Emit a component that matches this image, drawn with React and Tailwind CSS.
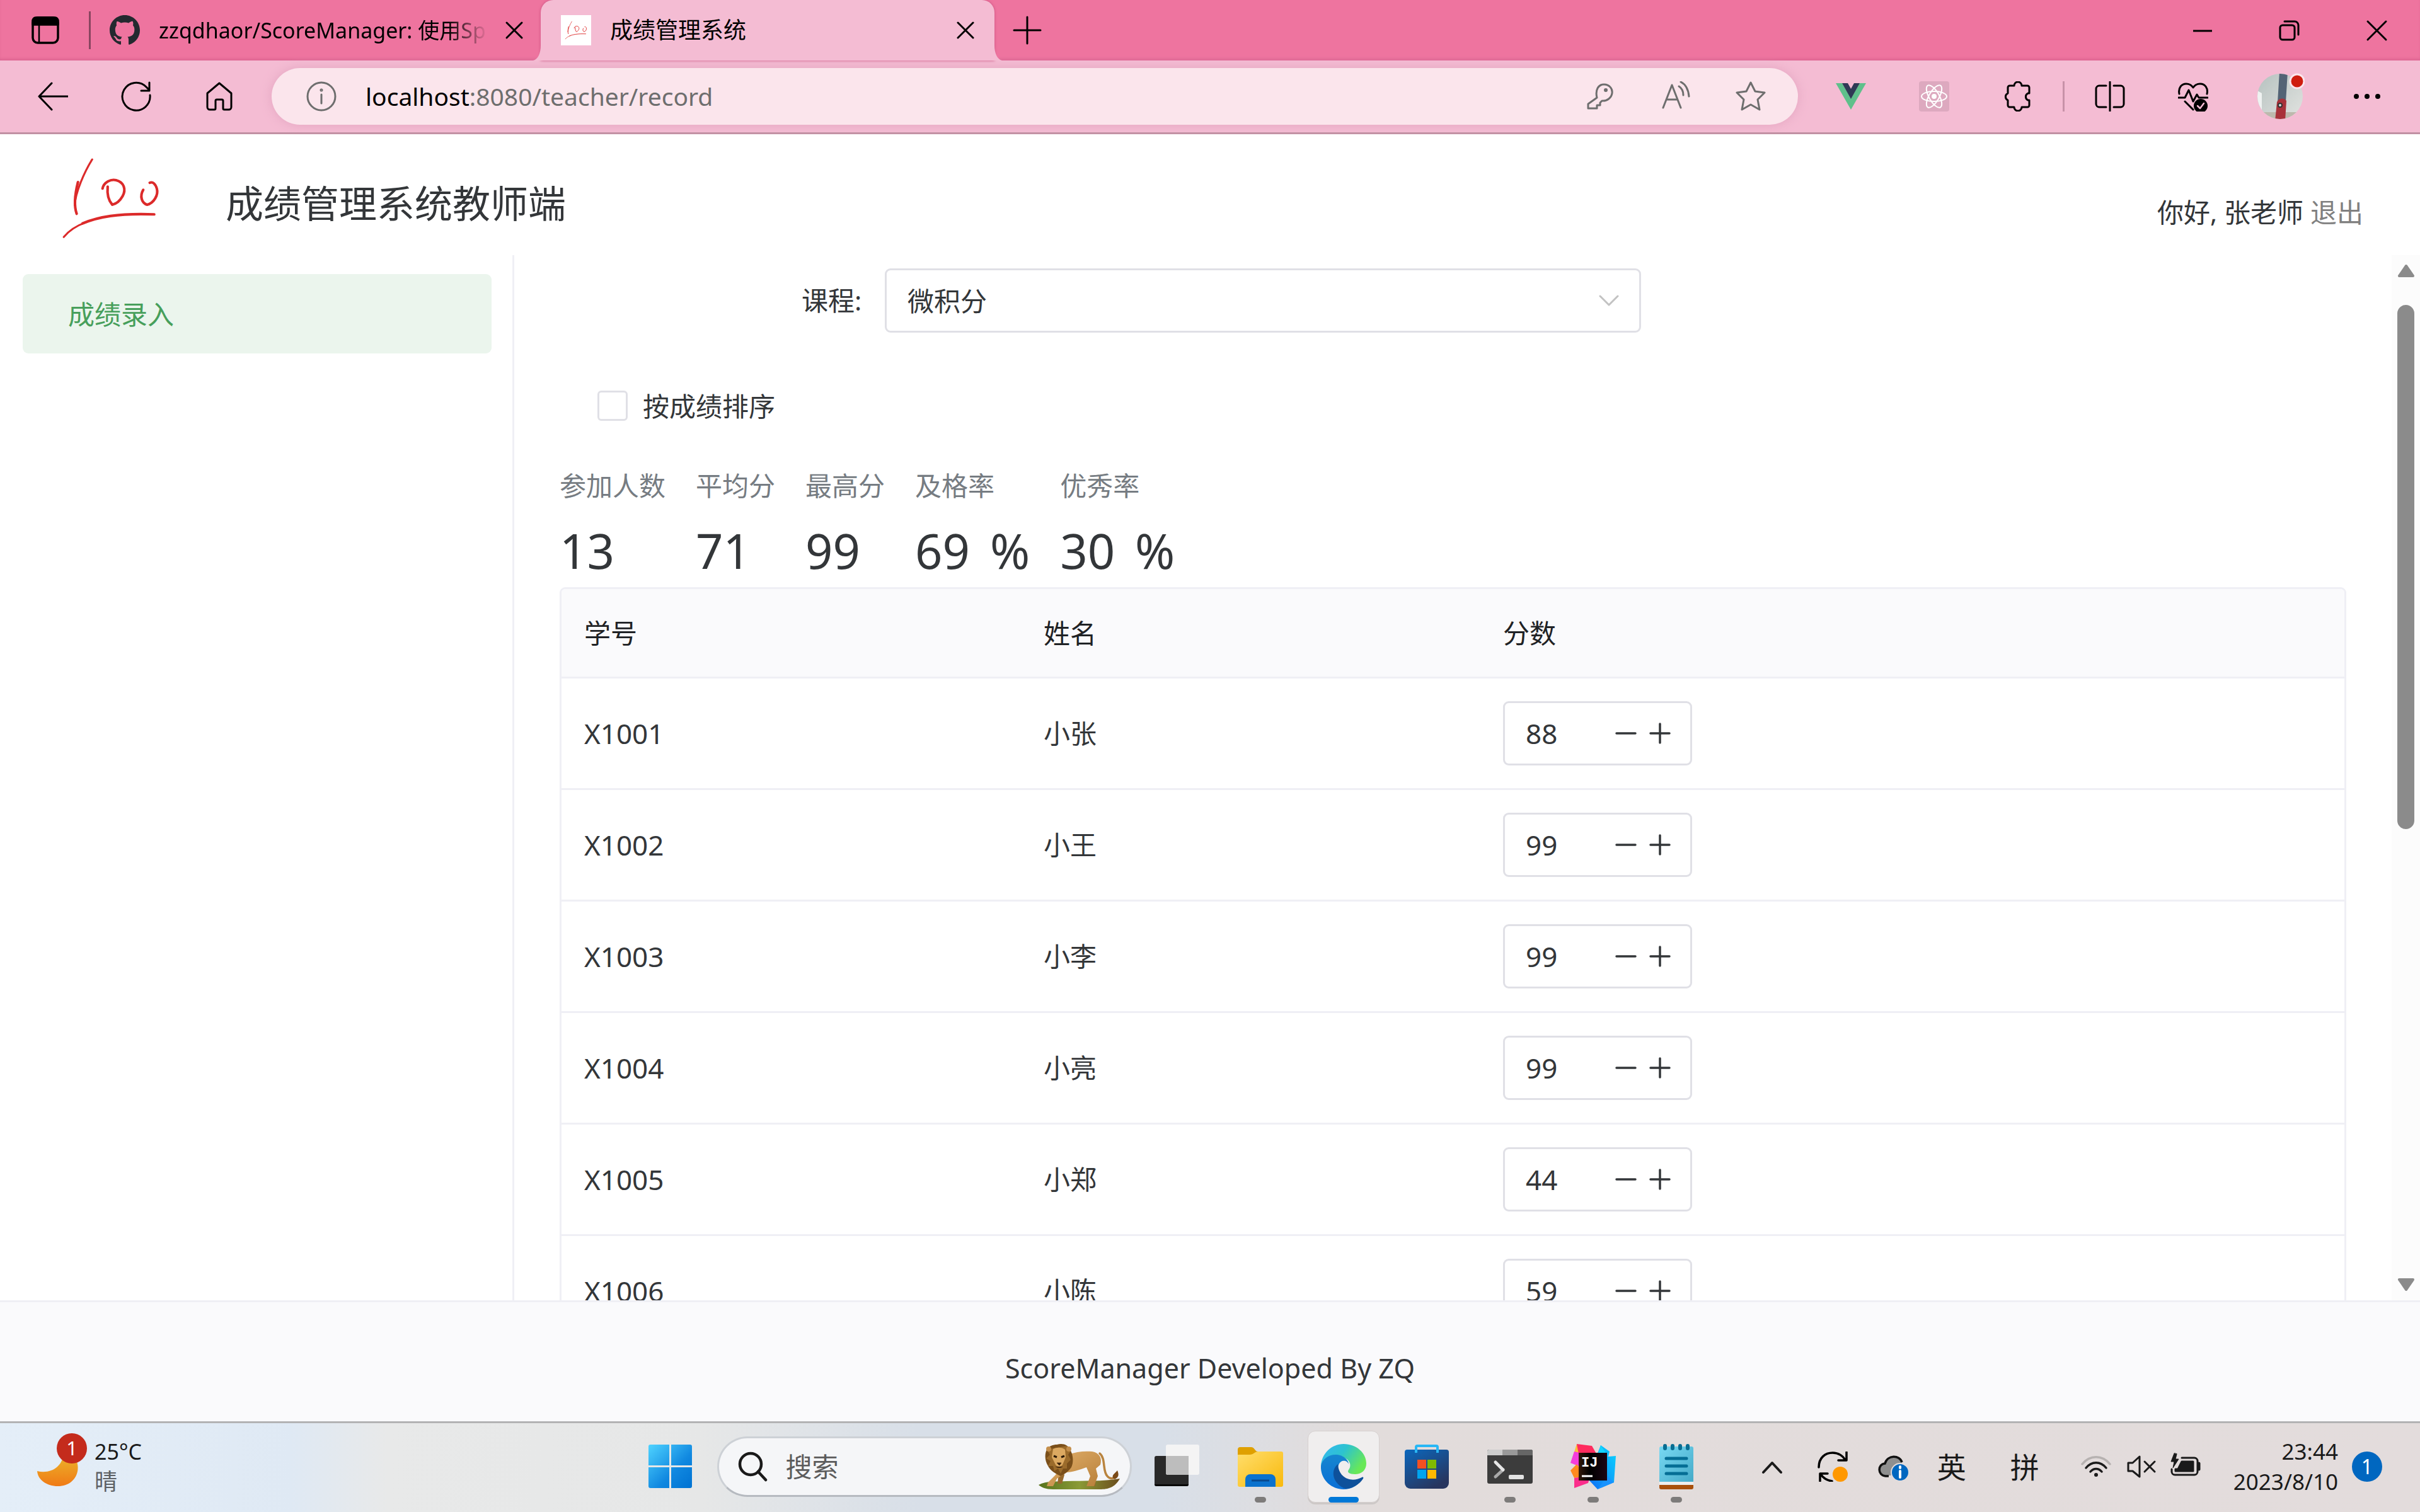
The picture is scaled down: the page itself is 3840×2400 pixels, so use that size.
import React, { useState } from "react";

const students = [
  { id: "X1001", name: "小张", score: 88 },
  { id: "X1002", name: "小王", score: 99 },
  { id: "X1003", name: "小李", score: 99 },
  { id: "X1004", name: "小亮", score: 99 },
  { id: "X1005", name: "小郑", score: 44 },
  { id: "X1006", name: "小陈", score: 59 },
];

const stats = [
  { label: "参加人数", value: "13" },
  { label: "平均分", value: "71" },
  { label: "最高分", value: "99" },
  { label: "及格率", value: "69", suffix: "%" },
  { label: "优秀率", value: "30", suffix: "%" },
];

function Line({ className = "size-12", w = 3, children, ...rest }) {
  return (
    <svg
      viewBox="0 0 48 48"
      className={className}
      fill="none"
      stroke="currentColor"
      strokeWidth={w}
      strokeLinecap="round"
      strokeLinejoin="round"
      aria-hidden="true"
      {...rest}
    >
      {children}
    </svg>
  );
}

function HundredMark({ className, w = 4 }) {
  return (
    <svg viewBox="98 250 156 130" className={className} fill="none" stroke="#dc2a2a" strokeLinecap="round" strokeLinejoin="round" aria-hidden="true">
      <path strokeWidth={w - 1} d="M147 255C135 274 121 306 120 326" />
      <path strokeWidth={w} d="M125 290C119 314 119 328 123 339" />
      <path strokeWidth={w} d="M163 300C165 290 176 285 184 287C196 290 200 301 194 312C190 319 184 324 178 325C172 318 170 307 171 297" />
      <path strokeWidth={w} d="M226 302C220 312 224 323 232 325C242 323 250 310 247 300C245 293 241 289 236 291" />
      <path strokeWidth={w - 1} d="M103 375C112 364 124 357 138 352" />
      <path strokeWidth={w} d="M132 354C156 344 186 338 243 340" />
    </svg>
  );
}

function TabStrip() {
  return (
    <div className="flex h-24 shrink-0 items-center bg-[#ee749f] text-black shadow-[inset_0_-4px_5px_-2px_#d9628f]">
      <button aria-label="标签页操作" className="ml-12 flex size-12 items-center justify-center">
        <Line w={3.5}>
          <rect x="4" y="4" width="40" height="40" rx="8" />
          <path d="M4 8a6 6 0 0 1 6-4h28a6 6 0 0 1 6 4v7H4z" fill="currentColor" />
          <path d="M14 16v27" strokeWidth="2.5" />
        </Line>
      </button>
      <div className="ml-[45px] h-15 w-[3px] bg-[#8a4560]" />
      <div className="ml-[30px] flex w-[684px] items-center">
        <svg viewBox="0 0 16 16" className="size-12 shrink-0" fill="#24292f" aria-hidden="true">
          <path d="M8 0C3.58 0 0 3.58 0 8c0 3.54 2.29 6.53 5.47 7.59.4.07.55-.17.55-.38 0-.19-.01-.82-.01-1.49-2.01.37-2.53-.49-2.69-.94-.09-.23-.48-.94-.82-1.13-.28-.15-.68-.52-.01-.53.63-.01 1.08.58 1.23.82.72 1.21 1.87.87 2.33.66.07-.52.28-.87.51-1.07-1.78-.2-3.64-.89-3.64-3.95 0-.87.31-1.59.82-2.15-.08-.2-.36-1.02.08-2.12 0 0 .67-.21 2.2.82.64-.18 1.32-.27 2-.27s1.36.09 2 .27c1.53-1.04 2.2-.82 2.2-.82.44 1.1.16 1.92.08 2.12.51.56.82 1.27.82 2.15 0 3.07-1.87 3.75-3.65 3.95.29.25.54.73.54 1.48 0 1.07-.01 1.93-.01 2.2 0 .21.15.46.55.38A8.01 8.01 0 0 0 16 8c0-4.42-3.58-8-8-8z" />
        </svg>
        <span className="ml-[30px] w-[522px] overflow-hidden whitespace-nowrap text-[34px] leading-[48px] [mask-image:linear-gradient(to_right,black_88%,transparent_100%)]">
          zzqdhaor/ScoreManager: 使用Sp
        </span>
        <button aria-label="关闭标签页" className="ml-[18px] flex size-12 shrink-0 items-center justify-center">
          <Line><path d="M12 12l24 24M36 12L12 36" /></Line>
        </button>
      </div>
      <div className="relative flex h-24 w-[720px] items-center rounded-t-[20px] bg-[#f4bcd3] shadow-[0_0_4px_#c9507e]">
        <svg viewBox="0 0 12 24" className="absolute bottom-0 -left-3 h-6 w-3" fill="#f4bcd3" aria-hidden="true"><path d="M12 0v24H0C8 22 12 12 12 0z" /></svg>
        <svg viewBox="0 0 12 24" className="absolute -right-3 bottom-0 h-6 w-3" fill="#f4bcd3" aria-hidden="true"><path d="M0 0v24h12C4 22 0 12 0 0z" /></svg>
        <span className="ml-8 flex size-12 items-center justify-center bg-white">
          <HundredMark className="w-9" w={4} />
        </span>
        <span className="ml-[30px] flex-1 text-[36px] leading-[48px]">成绩管理系统</span>
        <button aria-label="关闭标签页" className="mr-[22px] flex size-12 items-center justify-center">
          <Line><path d="M12 12l24 24M36 12L12 36" /></Line>
        </button>
      </div>
      <button aria-label="新建标签页" className="ml-7 size-12">
        <Line><path d="M24 3v42M3 24h42" /></Line>
      </button>
      <div className="ml-auto flex">
        <button aria-label="最小化" className="flex w-[138px] justify-center">
          <Line strokeLinecap="butt"><path d="M9 25h30" /></Line>
        </button>
        <button aria-label="还原" className="flex w-[138px] justify-center">
          <Line>
            <rect x="9" y="16" width="23" height="23" rx="4" />
            <path d="M16 10h16a6 6 0 0 1 6 6v15" />
          </Line>
        </button>
        <button aria-label="关闭" className="flex w-[138px] justify-center">
          <Line><path d="M10 10l29 29M39 10L10 39" /></Line>
        </button>
      </div>
    </div>
  );
}

function AddressBar() {
  return (
    <div className="flex h-[117px] shrink-0 items-center border-b-[3px] border-[#c191a3] bg-[#f4bcd3] pr-[18px] pl-15 text-black">
      <div className="flex gap-21">
        <button aria-label="后退"><Line><path d="M22 3L2 24l20 21M2 24h46" /></Line></button>
        <button aria-label="刷新">
          <Line><path d="M46 22a22 22 0 1 1-6-13l5 5M45 2v13H32" /></Line>
        </button>
        <button aria-label="主页">
          <Line><path d="M24 3L5 19v22a4 4 0 0 0 4 4h7a2 2 0 0 0 2-2V31a2 2 0 0 1 2-2h8a2 2 0 0 1 2 2v12a2 2 0 0 0 2 2h7a4 4 0 0 0 4-4V19z" /></Line>
        </button>
      </div>
      <div className="mr-[18px] ml-[59px] flex h-[90px] flex-1 items-center rounded-full bg-[#fbe5ec] pr-[15px] pl-[55px] text-[#6e6e6e] shadow-[0_0_18px_#e3a5c0]">
        <button aria-label="网站信息">
          <Line>
            <circle cx="24" cy="24" r="22" />
            <path d="M24 21v14" />
            <circle cx="24" cy="14" r="1" />
          </Line>
        </button>
        <span className="ml-[46px] flex-1 text-[39px] leading-[60px]">
          <span className="text-black">localhost</span>:8080/teacher/record
        </span>
        <button aria-label="密码" className="flex w-30 justify-center">
          <Line>
            <path d="M20 26C17 14 22 5 31 5s14 7 13 14-8 13-16 12l-3 3v4h-5v5H6v-7z" />
            <circle cx="34" cy="14" r="1.5" />
          </Line>
        </button>
        <button aria-label="朗读" className="flex w-30 justify-center">
          <Line><path d="M5 42L19 6l14 36M10 29h18M30 8c5 3 7 8 7 14M33 1c8 4 12 12 13 23" /></Line>
        </button>
        <button aria-label="收藏" className="flex w-30 justify-center">
          <Line><path d="M24 2l7 14 15 2-11 11 3 16-14-8-14 8 3-16L2 18l15-2z" /></Line>
        </button>
      </div>
      <button aria-label="Vue" className="flex w-[132px] justify-center">
        <svg viewBox="0 0 48 48" className="size-12" aria-hidden="true">
          <path d="M0 3h10l14 24L38 3h10L24 45z" fill="#5fc08b" />
          <path d="M10 3h9l5 9 5-9h9L24 28z" fill="#2f3a55" />
        </svg>
      </button>
      <button aria-label="React" className="flex w-[132px] justify-center">
        <svg viewBox="0 0 48 48" className="size-12" fill="none" stroke="#fff" strokeWidth="2" aria-hidden="true">
          <rect width="48" height="48" rx="4" fill="#dda9bf" stroke="none" />
          <ellipse cx="24" cy="24" rx="20" ry="8" />
          <ellipse cx="24" cy="24" rx="20" ry="8" transform="rotate(60 24 24)" />
          <ellipse cx="24" cy="24" rx="20" ry="8" transform="rotate(120 24 24)" />
          <circle cx="24" cy="24" r="4" fill="#fff" stroke="none" />
        </svg>
      </button>
      <button aria-label="扩展" className="flex w-[132px] justify-center">
        <Line><path d="M9 10a3 3 0 0 1 3-3h7a6 6 0 0 1 12 0h9a3 3 0 0 1 3 3v9h-2a6 6 0 0 0 0 11h2v8a3 3 0 0 1-3 3h-9a6 6 0 0 1-12 0h-7a3 3 0 0 1-3-3v-8a6 6 0 0 1 0-11z" /></Line>
      </button>
      <div className="mr-[6px] ml-[6px] h-12 w-[3px] bg-[#c792a8]" />
      <button aria-label="分屏" className="flex w-[132px] justify-center">
        <Line><path d="M24 1v46M18 7H7a5 5 0 0 0-5 5v24a5 5 0 0 0 5 5h11M30 7h11a5 5 0 0 1 5 5v24a5 5 0 0 1-5 5H30" /></Line>
      </button>
      <button aria-label="浏览器概要" className="flex w-[132px] justify-center">
        <Line>
          <path d="M2 20C0 10 6 4 13 4c5 0 9 3 11 6 2-3 6-6 11-6 8 0 13 7 11 16M1 26h10l6-12 7 18 6-11 3 5h14M11 32l13 13" />
          <circle cx="36" cy="39" r="11" fill="currentColor" stroke="none" />
          <path d="M31 39l4 4 6-8" stroke="#f4bcd3" strokeWidth="2.5" />
        </Line>
      </button>
      <button aria-label="个人资料" className="flex w-36 justify-center">
        <svg viewBox="0 0 78 78" className="size-[78px]" aria-hidden="true">
          <defs>
            <clipPath id="avatarClip"><circle cx="39" cy="39" r="36" /></clipPath>
            <linearGradient id="avatarWall" x1="0" x2="1" y1="0" y2="1">
              <stop offset="0" stopColor="#b4c0be" />
              <stop offset="1" stopColor="#e4e5e2" />
            </linearGradient>
          </defs>
          <g clipPath="url(#avatarClip)">
            <rect width="78" height="78" fill="url(#avatarWall)" />
            <path d="M0 64h78v14H0z" fill="#bdb9ad" />
            <path d="M3 30l7 4v30H3z" fill="#eff2f1" />
            <path d="M38 0h13L48 48H35z" fill="#536375" />
            <path d="M34 48c2-6 11-8 15-2l-2 32H31z" fill="#a8323a" />
            <circle cx="39" cy="53" r="3" fill="#ddd" stroke="#333" strokeWidth="2" />
          </g>
          <circle cx="66" cy="15" r="11" fill="#cf1d0f" stroke="#fbe5ec" strokeWidth="3" />
        </svg>
      </button>
      <button aria-label="设置及其他" className="flex w-[132px] justify-center">
        <Line stroke="none" fill="currentColor"><circle cx="7" cy="24" r="4" /><circle cx="24" cy="24" r="4" /><circle cx="41" cy="24" r="4" /></Line>
      </button>
    </div>
  );
}

function ScoreInput({ student }) {
  const [value, setValue] = useState(student.score);
  return (
    <div className="flex h-[102px] w-[300px] items-center rounded-[9px] border-[3px] border-[#e0e0e6] bg-white pr-[21px] pl-[33px]">
      <input
        aria-label={student.name + "的分数"}
        inputMode="numeric"
        value={value}
        onChange={(e) => setValue(Number(e.target.value) || 0)}
        className="w-0 flex-1 bg-transparent text-[44px] leading-[66px] outline-none"
      />
      <button aria-label="减少" className="flex w-[54px] justify-center" onClick={() => setValue(value - 1)}>
        <Line w={3.5}><path d="M9 24h30" /></Line>
      </button>
      <button aria-label="增加" className="flex w-[54px] justify-center" onClick={() => setValue(value + 1)}>
        <Line w={3.5}><path d="M9 24h30M24 9v30" /></Line>
      </button>
    </div>
  );
}

function Content() {
  return (
    <main className="flex min-w-0 flex-1 overflow-hidden">
      <div className="min-w-0 flex-1 px-18 pt-[21px]">
        <div className="flex items-center pl-96">
          <label htmlFor="course" className="w-24 whitespace-nowrap leading-[66px]">课程:</label>
          <div className="relative ml-9 w-[1200px]">
            <select id="course" className="h-[102px] w-full appearance-none rounded-[9px] border-[3px] border-[#e0e0e6] bg-white px-[33px] outline-none">
              <option>微积分</option>
            </select>
            <Line w={3} className="pointer-events-none absolute top-[27px] right-[27px] size-12 text-[#c2c2c2]"><path d="M10 17l14 14 14-14" /></Line>
          </div>
        </div>
        <label className="mt-18 ml-15 flex h-[88px] w-fit items-center gap-6">
          <input type="checkbox" className="size-12 appearance-none rounded-[6px] border-[3px] border-[#e0e0e6] bg-white checked:bg-[#18a058]" />
          按成绩排序
        </label>
        <dl className="mt-[50px] flex gap-12">
          {stats.map((s) => (
            <div key={s.label}>
              <dt className="leading-[66px] text-[#767c82]">{s.label}</dt>
              <dd className="mt-3 flex gap-8 text-[76px] leading-[116px]">
                <span>{s.value}</span>
                {s.suffix && <span>{s.suffix}</span>}
              </dd>
            </div>
          ))}
        </dl>
        <div className="overflow-hidden rounded-[9px] border-[3px] border-[#efeff5]">
          <table className="w-full table-fixed border-collapse text-left">
            <thead className="bg-[#fafafc] text-[#1f2225]">
              <tr className="h-[140px] border-b-[3px] border-[#efeff5]">
                <th scope="col" className="w-[729px] px-9 font-normal">学号</th>
                <th scope="col" className="w-[729px] px-9 font-normal">姓名</th>
                <th scope="col" className="px-9 font-normal">分数</th>
              </tr>
            </thead>
            <tbody>
              {students.map((s) => (
                <tr key={s.id} className="h-[177px] border-b-[3px] border-[#efeff5]">
                  <td className="px-9 text-[44px]">{s.id}</td>
                  <td className="px-9">{s.name}</td>
                  <td className="px-9"><ScoreInput student={s} /></td>
                </tr>
              ))}
            </tbody>
          </table>
        </div>
      </div>
      <div className="flex w-[45px] shrink-0 flex-col items-center bg-[#fcfcfc] py-[13px]" aria-hidden="true">
        <svg viewBox="0 0 28 24" className="h-6 w-7" fill="#8b8b8b" stroke="#8b8b8b" strokeWidth="4" strokeLinejoin="round"><path d="M14 4L3 20h22z" /></svg>
        <div className="mt-[42px] h-[832px] w-[27px] rounded-full bg-[#8b8b8b]" />
        <svg viewBox="0 0 28 24" className="mt-auto h-6 w-7" fill="#8b8b8b" stroke="#8b8b8b" strokeWidth="4" strokeLinejoin="round"><path d="M14 20L3 4h22z" /></svg>
      </div>
    </main>
  );
}

function AppIcon({ label, dot, active, children }) {
  return (
    <button aria-label={label} className="relative flex h-full w-[132px] items-center justify-center">
      {active && <span className="absolute inset-x-[9px] top-3 bottom-3 rounded-[12px] border border-[#d6d0cf] bg-[#f0eeee] shadow-[0_3px_0_#cdc8c7]" />}
      <svg viewBox="0 0 72 72" className="relative size-18" aria-hidden="true">{children}</svg>
      {dot && <span className="absolute bottom-3 h-[9px] w-[18px] rounded-full bg-[#7d7b7a]" />}
      {active && <span className="absolute bottom-3 h-[9px] w-12 rounded-full bg-[#0078d7]" />}
    </button>
  );
}

function Lion() {
  return (
    <svg viewBox="0 0 132 74" className="h-[74px] w-[132px]" aria-hidden="true">
      <defs>
        <linearGradient id="lionBody" x1="0" x2="1" y1="0" y2="1">
          <stop offset="0" stopColor="#e2b16c" />
          <stop offset="1" stopColor="#b87f39" />
        </linearGradient>
        <linearGradient id="lionGrass" x1="0" x2="1">
          <stop offset="0" stopColor="#56731d" />
          <stop offset="0.5" stopColor="#8a9a35" />
          <stop offset="1" stopColor="#6b4d1d" />
        </linearGradient>
      </defs>
      <path d="M1 66C14 59 30 61 46 60C70 59 104 61 130 56C122 70 112 73 98 73H24C12 73 6 70 1 66z" fill="url(#lionGrass)" />
      <path d="M98 16C108 24 102 44 110 52C114 57 120 57 124 52" fill="none" stroke="#b9843f" strokeWidth="3.5" strokeLinecap="round" />
      <path d="M119 55C117 50 122 48 126 43C129 50 128 54 122 57z" fill="#7a4a17" />
      <path d="M84 34l8 18-1 16h-9l2-14-6-16z" fill="#96682c" />
      <path d="M38 44l4 6-4 14h-7l2-16z" fill="#96682c" />
      <path d="M48 18C60 13 74 12 86 13C98 15 102 24 99 34L92 40l3 12-6 16H77l2-5 4-11-6-14C66 42 54 46 46 46L30 56 24 68H14l2-6 12-12z" fill="url(#lionBody)" />
      <path d="M30 2C40-1 48 3 50 9C56 16 57 30 53 38C48 45 42 49 36 52C28 48 20 44 16 36C10 26 11 16 14 10C18 4 24 2 30 2z" fill="#7a4f1a" />
      <path d="M14 10l5 8-6 6 7 4-4 8 8 0 2 8 6-4 4 8 4-8 6 0 0-8 6-6-4-8 4-6-6-8z" fill="#9b6b2b" />
      <path d="M24 9C30 6 38 6 43 10L44 22L39 34C36 38 31 38 28 34L22 22z" fill="#dca961" />
      <circle cx="17" cy="9" r="4" fill="#c48f4c" />
      <circle cx="49" cy="9" r="4" fill="#c48f4c" />
      <path d="M25 20l5 2M42 20l-5 2" stroke="#2d1b08" strokeWidth="3" />
      <path d="M30 31h7l-3 4zM28 37c4 2 8 2 11 0" fill="#2d1b08" stroke="#5a3816" />
    </svg>
  );
}

function Taskbar() {
  return (
    <footer className="flex h-36 shrink-0 items-center border-t-[3px] border-[#b3b3b4] bg-[linear-gradient(90deg,#e4eef8_0%,#dfe9f4_12%,#e8e9e9_16%,#e6e7e7_29%,#d8dfe8_38%,#d8dfe8_48%,#e2dcdb_56%,#e3dcdc_100%)] pb-[3px] text-[#1a1a1a]">
      <button className="flex w-[26%] items-center pl-[58px] text-left" aria-label="天气">
        <svg viewBox="0 0 80 114" className="h-[114px] w-20" aria-hidden="true">
          <defs>
            <linearGradient id="moon" x1="0" x2="0" y1="0" y2="1">
              <stop offset="0" stopColor="#ebc02f" />
              <stop offset="1" stopColor="#f07a16" />
            </linearGradient>
          </defs>
          <path d="M47 28C78 48 68 88 34 88C16 88 2 78 1 64C22 69 43 58 43 32z" fill="url(#moon)" />
          <circle cx="56" cy="28" r="24" fill="#c42b1c" />
          <text x="56" y="39" textAnchor="middle" fontSize="31" fill="#fff">1</text>
        </svg>
        <span className="ml-3 flex flex-col">
          <span className="text-[34px] leading-[48px]">25°C</span>
          <span className="text-[36px] leading-[48px] text-[#5d6064]">晴</span>
        </span>
      </button>
      <div className="flex h-full items-center">
        <AppIcon label="开始">
          <defs>
            <linearGradient id="win" x1="0" x2="1" y1="0" y2="1">
              <stop offset="0" stopColor="#4fd3ff" />
              <stop offset="0.6" stopColor="#1088e0" />
              <stop offset="1" stopColor="#0072d2" />
            </linearGradient>
          </defs>
          <path fill="url(#win)" d="M4 1h30v33H1V4a3 3 0 0 1 3-3zM37 1h30a3 3 0 0 1 3 3v30H37zM1 37h33v33H4a3 3 0 0 1-3-3zM37 37h33v30a3 3 0 0 1-3 3H37z" />
        </AppIcon>
        <label className="mr-[6px] ml-2 flex h-24 w-[658px] items-center rounded-full border-[3px] border-[#cdd1d6] border-b-[#b6bac0] bg-[#f5f6f8] pr-[14px] pl-[30px]">
          <Line w={4.5} className="size-12 shrink-0">
            <circle cx="20" cy="20" r="17" />
            <path d="M32 32l12 13" />
          </Line>
          <input aria-label="搜索" placeholder="搜索" className="ml-[27px] w-0 flex-1 bg-transparent text-[42px] leading-[60px] outline-none placeholder:text-[#5c5c5c]" />
          <Lion />
        </label>
        <AppIcon label="任务视图">
          <rect y="19" width="54" height="48" rx="3" fill="#292929" />
          <path d="M0 64h54a3 3 0 0 1-3 3H3a3 3 0 0 1-3-3z" fill="#080808" />
          <rect x="18" y="1" width="53" height="48" rx="3" fill="#f4f4f4" />
          <path d="M18 19h36v30H21a3 3 0 0 1-3-3z" fill="#bdbdbd" />
        </AppIcon>
        <AppIcon label="文件资源管理器" dot>
          <defs>
            <linearGradient id="folder" x1="0" x2="1" y1="0" y2="1"><stop offset="0" stopColor="#ffde6c" /><stop offset="1" stopColor="#f9b90c" /></linearGradient>
          </defs>
          <path d="M0 9a4 4 0 0 1 4-4h17c6 0 6 7 11 7v10H0z" fill="#dfa000" />
          <path d="M0 17h19c6 0 8-5 14-5h36a3 3 0 0 1 3 3v50a3 3 0 0 1-3 3H3a3 3 0 0 1-3-3z" fill="url(#folder)" />
          <path d="M12 68V56a8 8 0 0 1 8-8h32a8 8 0 0 1 8 8v12z" fill="#0a72ce" />
          <path d="M22 58h28" stroke="#07498f" strokeWidth="3" />
        </AppIcon>
        <AppIcon label="Edge" active>
          <defs>
            <linearGradient id="edgeTop" x1="0" x2="1" y1="0" y2="0.5"><stop offset="0" stopColor="#35b5f5" /><stop offset="0.5" stopColor="#2dc3cf" /><stop offset="1" stopColor="#68e857" /></linearGradient>
            <linearGradient id="edgeLeft" x1="0" x2="0" y1="0" y2="1"><stop offset="0" stopColor="#1686cf" /><stop offset="1" stopColor="#0a6fd6" /></linearGradient>
          </defs>
          <path d="M0 35C1 15 17 0 36 0c20 0 36 14 36 31 0 11-8 17-18 17-9 0-13-3-10-7 5-6 3-17-10-20z" fill="url(#edgeTop)" />
          <path d="M0 35C2 24 12 17 23 17c12 0 21 8 21 15-2-5-6-6-10-5-9 3-9 20 0 28 10 8 23 5 33-2-6 12-18 19-31 19C16 72-1 56 0 35z" fill="url(#edgeLeft)" />
          <path d="M27 32C14 42 19 64 39 71C51 71 62 63 67 55c1-2 0-3-2-2C48 62 28 54 27 32z" fill="#0e519b" />
        </AppIcon>
        <AppIcon label="Microsoft Store">
          <defs>
            <linearGradient id="store" x1="0" x2="0.6" y1="0" y2="1"><stop offset="0" stopColor="#0b67bd" /><stop offset="1" stopColor="#28365f" /></linearGradient>
          </defs>
          <path d="M1 13a4 4 0 0 1 4-4h62a4 4 0 0 1 4 4v49a9 9 0 0 1-9 9H10a9 9 0 0 1-9-9z" fill="url(#store)" />
          <path d="M19 14V5a2 2 0 0 1 2-2h30a2 2 0 0 1 2 2v9" fill="none" stroke="#28b7f5" strokeWidth="4" />
          <path d="M21 25h14v14H21z" fill="#f25022" /><path d="M37 25h14v14H37z" fill="#7fba00" />
          <path d="M21 41h14v14H21z" fill="#00a4ef" /><path d="M37 41h14v14H37z" fill="#ffb900" />
        </AppIcon>
        <AppIcon label="终端" dot>
          <rect y="9" width="72" height="54" rx="3" fill="#3c3c3c" />
          <path d="M3 9h21v9H0v-6a3 3 0 0 1 3-3z" fill="#ccc" /><path d="M24 9h24v9H24z" fill="#999" /><path d="M48 9h21a3 3 0 0 1 3 3v6H48z" fill="#666" />
          <path d="M25 41L13 52" stroke="#a9a9a9" strokeWidth="5" strokeLinecap="round" /><path d="M13 29l12 12" stroke="#e6e6e6" strokeWidth="5" strokeLinecap="round" />
          <rect x="34" y="49" width="24" height="7" rx="2" fill="#e2e2e2" />
        </AppIcon>
        <AppIcon label="IntelliJ IDEA" dot>
          <defs>
            <linearGradient id="ijBlue" x1="0" x2="1" y1="1" y2="0"><stop offset="0" stopColor="#0f6cf5" /><stop offset="1" stopColor="#0ad8ff" /></linearGradient>
            <linearGradient id="ijBox" x1="0" x2="1"><stop offset="0" stopColor="#33190a" /><stop offset="0.4" stopColor="#000" /><stop offset="1" stopColor="#1b0614" /></linearGradient>
          </defs>
          <path d="M10 0l12 12-8 26-13-10z" fill="#fbbf3c" />
          <path d="M6 12l9 2v22L0 30z" fill="#f43ddb" />
          <path d="M10 0l24 3 8 14-28 4z" fill="#ff2b5e" />
          <path d="M0 42l10-10 12 20-16 2z" fill="#ff8a1e" />
          <path d="M6 54l26-4-4 12-22 8z" fill="#fb2d8b" />
          <path d="M48 2l14 10-2 8 12-1-3 42-26 11-14-15 12-37z" fill="url(#ijBlue)" />
          <path d="M48 2l12 18-18 2z" fill="#14d4ff" /><path d="M69 61L44 71l14-20z" fill="#1792ff" />
          <rect x="13" y="14" width="45" height="44" fill="url(#ijBox)" />
          <text x="17" y="36" fontFamily="Liberation Mono, monospace" fontWeight="bold" fontSize="22" fill="#fff">IJ</text>
          <path d="M18 51h17" stroke="#fff" strokeWidth="3" />
        </AppIcon>
        <AppIcon label="记事本" dot>
          <defs>
            <linearGradient id="note" x1="0" x2="1" y1="0" y2="1"><stop offset="0" stopColor="#78d9f3" /><stop offset="1" stopColor="#45aac8" /></linearGradient>
          </defs>
          <path d="M9 62h54v7a3 3 0 0 1-3 3H12a3 3 0 0 1-3-3z" fill="#a9500c" />
          <path d="M9 56h54v9H9z" fill="#eee" />
          <path d="M9 7a3 3 0 0 1 3-3h48a3 3 0 0 1 3 3v53H9z" fill="url(#note)" />
          <path d="M18 3v4M30 3v4M42 3v4M54 3v4" stroke="#086d92" strokeWidth="6" strokeLinecap="round" />
          <path d="M20 23h32M20 35h32M20 47h32" stroke="#056e95" strokeWidth="5" strokeLinecap="round" />
        </AppIcon>
      </div>
      <div className="ml-auto flex items-center pr-15">
        <button aria-label="显示隐藏的图标" className="mr-12"><Line w={4}><path d="M10 33l14-15 14 15" /></Line></button>
        <button aria-label="更新" className="mr-12">
          <Line w={3.5} stroke="#000">
            <path d="M2 25C2 10 12 2 24 2c9 0 17 5 20 12M46 1v13H33M4 47V35h12M5 36c4 6 10 10 18 11" />
            <circle cx="36" cy="36" r="12" fill="#ff9800" stroke="none" />
          </Line>
        </button>
        <button aria-label="OneDrive" className="mr-[46px]">
          <svg viewBox="0 0 48 48" className="size-12" aria-hidden="true">
            <path d="M14 38H11C0 36-1 22 11 19C15 5 34 5 38 18L20 38z" fill="#8f8f8f" />
            <path d="M17 39H12C-1 38-1 20 11 19C15 5 34 5 38 17" fill="none" stroke="#111" strokeWidth="3.5" />
            <circle cx="35" cy="33" r="14" fill="#0067c0" stroke="#e3dcdc" strokeWidth="2" />
            <path d="M35 31v10M35 24v2" stroke="#fff" strokeWidth="4" strokeLinecap="round" />
          </svg>
        </button>
        <button className="mr-[70px] text-[46px] leading-[60px]">英</button>
        <button className="mr-[66px] text-[46px] leading-[60px]">拼</button>
        <button aria-label="网络" className="mr-6">
          <Line w={3.5}>
            <path d="M2 20C14 5 34 5 46 20" stroke="#b7b2b1" />
            <path d="M8 26c9-11 23-11 32 0M15 32c5-6 13-6 18 0" />
            <circle cx="24" cy="37" r="3" fill="currentColor" stroke="none" />
          </Line>
        </button>
        <button aria-label="静音" className="mr-[22px]">
          <Line><path d="M3 18h7l11-10v32L10 31H3zM29 16l16 16M45 16L29 32" /></Line>
        </button>
        <button aria-label="电池" className="mr-[52px]">
          <Line>
            <path d="M18 10h20a5 5 0 0 1 5 5v17a5 5 0 0 1-5 5H7a5 5 0 0 1-5-5v-4" />
            <path d="M18 16h18v15H8v-3h4z" fill="currentColor" />
            <path d="M45 19v9" strokeWidth="5" />
            <path d="M6 3L1 16h5L4 26l9-14H8l2-8z" fill="currentColor" strokeWidth="1" />
          </Line>
        </button>
        <time className="flex flex-col items-end text-[35px] leading-[48px]" dateTime="2023-08-10T23:44">
          <span>23:44</span>
          <span>2023/8/10</span>
        </time>
        <button aria-label="1 条通知" className="ml-[22px] size-12 rounded-full bg-[#0067c0] text-center text-[32px] leading-[48px] text-white">1</button>
      </div>
    </footer>
  );
}

export default function App() {
  return (
    <div className="flex h-screen flex-col overflow-hidden bg-white font-['Noto_Sans','Noto_Sans_CJK_SC',sans-serif] text-[42px] text-[#333639]">
      <TabStrip />
      <AddressBar />
      <header className="flex h-48 shrink-0 items-center pr-[90px] pl-24">
        <HundredMark className="mt-3 w-[160px]" />
        <h1 className="ml-[102px] pt-7 text-[60px] leading-[84px]">成绩管理系统教师端</h1>
        <p className="ml-auto pt-[56px] leading-[66px]">
          你好, 张老师 <a href="#logout" className="text-[#808080]">退出</a>
        </p>
      </header>
      <div className="flex min-h-0 flex-1">
        <nav className="w-[816px] shrink-0 border-r-[3px] border-[#efeff5] px-9 pt-[30px]">
          <a href="#record" className="mr-[-3px] flex h-[126px] items-center rounded-[9px] bg-[#ebf5ed] px-18 text-[#479f5b]">成绩录入</a>
        </nav>
        <Content />
      </div>
      <div className="h-48 shrink-0 border-t-[3px] border-[#efeff5] bg-[#fafafc] pt-[72px] text-center text-[43px] leading-[66px]">
        ScoreManager Developed By ZQ
      </div>
      <Taskbar />
    </div>
  );
}
